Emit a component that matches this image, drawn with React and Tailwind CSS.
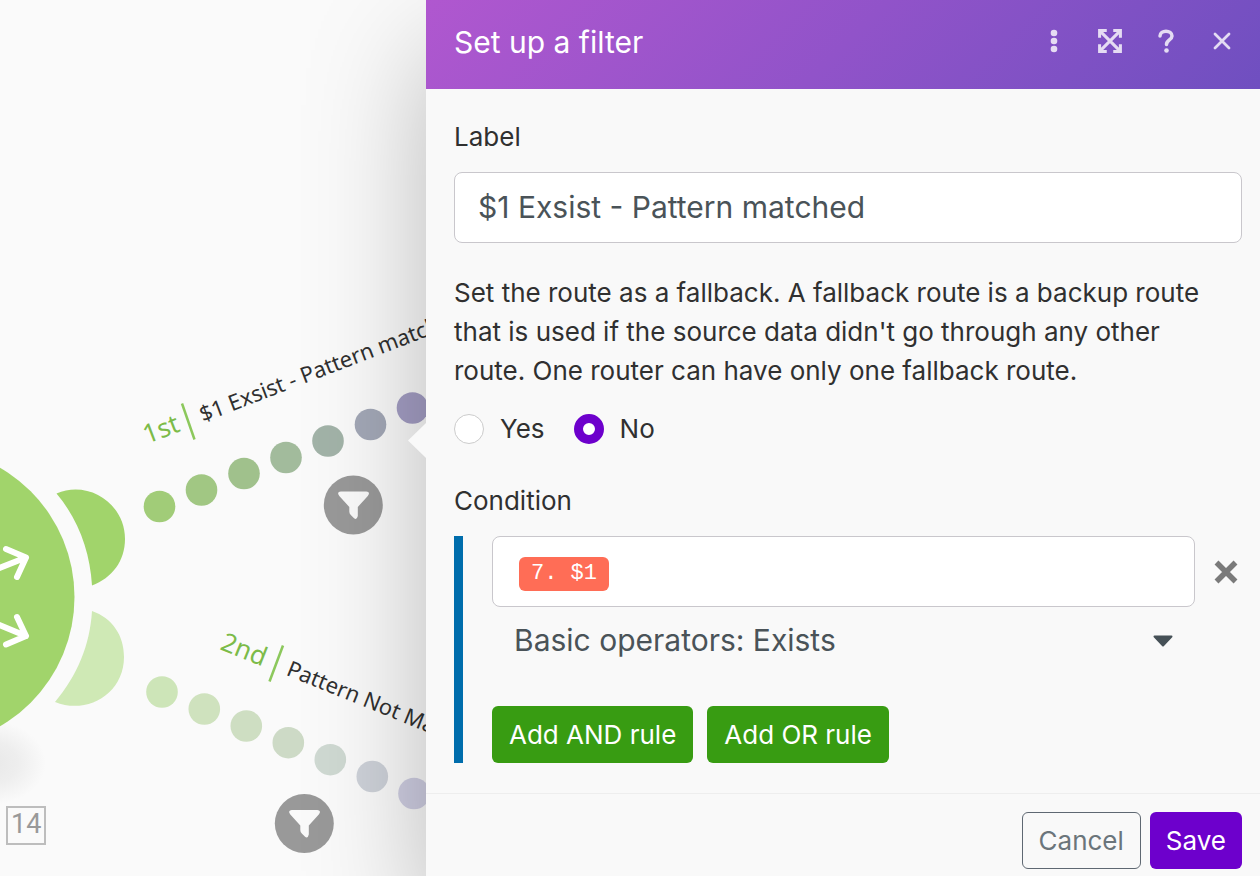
import { useState } from "react";

const firstRoute = [
  { x: 159.5, y: 506.5, color: "#a1cc78" },
  { x: 201.5, y: 490, color: "#a1c783" },
  { x: 244, y: 473.5, color: "#a0c18c" },
  { x: 286, y: 457.5, color: "#a2bb9c" },
  { x: 328, y: 441, color: "#a2b3a8" },
  { x: 370.5, y: 424.5, color: "#a3a8b7" },
  { x: 412.5, y: 408, color: "#a49ec4" },
];

const secondRoute = [
  { x: 162, y: 692, color: "#cde5b8" },
  { x: 204.3, y: 709, color: "#cfe2be" },
  { x: 246.3, y: 726, color: "#cedec2" },
  { x: 288.3, y: 742.7, color: "#cddac6" },
  { x: 330.3, y: 759.7, color: "#cfd9d2" },
  { x: 372.3, y: 776.5, color: "#ced2d9" },
  { x: 414, y: 793.5, color: "#cfcee2" },
];

function FilterBadge({ x, y }) {
  return (
    <g transform={`translate(${x} ${y})`}>
      <circle r="29.5" fill="#999" />
      <path
        d="M-12.500 -13.500H13Q17.500 -13 14.500 -9L4.500 2V11Q3.500 15.500 0.500 13L-2.500 10Q-4 8.500 -4 6.500V2L-14 -9Q-17 -13 -12.500 -13.500Z"
        fill="#fafafa"
      />
    </g>
  );
}

function Canvas() {
  return (
    <section aria-label="Scenario" className="relative w-[426px] shrink-0 overflow-hidden bg-[#fafafa]">
      <svg className="absolute top-0 left-0" width="426" height="876" viewBox="0 0 426 876">
        <defs>
          <radialGradient id="ground">
            <stop offset="0" stopColor="#e8e8e8" />
            <stop offset="0.5" stopColor="#eeeeee" />
            <stop offset="1" stopColor="#fafafa" />
          </radialGradient>
        </defs>
        <ellipse cx="-10" cy="763" rx="56" ry="42" fill="url(#ground)" />
        <circle cx="-75" cy="597" r="149.5" fill="#a1d46b" />
        <g fill="none" stroke="#fff" strokeWidth="6" strokeLinecap="round" strokeLinejoin="round">
          <path d="M-8 571L26 557.5M6 549L26 557.5L17 577" />
          <path d="M-8 622L26 636M17 617L26 636L6 644.500" />
        </g>
        <path d="M56.500 493.500C88 480 125 503 125 539C125 561 112 578 92 585.500C90 551 78 519 56.500 493.500Z" fill="#a1d46b" />
        <path d="M92 611C112 618 124 635 124 657C124 694 87 715 55 702C77 676 90 645 92 611Z" fill="#cfe9b5" />
        {firstRoute.map((dot) => (
          <circle key={dot.x} cx={dot.x} cy={dot.y} r="15.800" fill={dot.color} />
        ))}
        {secondRoute.map((dot) => (
          <circle key={dot.x} cx={dot.x} cy={dot.y} r="15.800" fill={dot.color} />
        ))}
        <FilterBadge x={353.300} y={505} />
        <FilterBadge x={304.300} y={823.500} />
        <g transform="translate(147 444) rotate(-21)" fontFamily="'Noto Sans', sans-serif">
          <text fontSize="26" fill="#7cbb48">1st</text>
          <text x="60" y="0" fontSize="22" fill="#303030">$1 Exsist - Pattern matched</text>
        </g>
        <path d="M182 403.500L194.500 439.500" stroke="#8cc85c" strokeWidth="2.500" />
        <g transform="translate(219 649) rotate(22)" fontFamily="'Noto Sans', sans-serif">
          <text fontSize="26" fill="#7cbb48">2nd</text>
          <text x="71" y="-1" fontSize="22" fill="#303030">Pattern Not Matched</text>
        </g>
        <path d="M283 645.500L269.500 681.500" stroke="#8cc85c" strokeWidth="2.500" />
        <rect x="7" y="807" width="38" height="37" fill="none" stroke="#bdbdbd" strokeWidth="2" />
        <text x="11" y="833" fontSize="27" fontFamily="Roboto, sans-serif" fill="#999">14</text>
      </svg>
    </section>
  );
}

function HeaderButton({ label, children }) {
  return (
    <button type="button" aria-label={label} className="flex size-8 items-center justify-center text-white/80">
      {children}
    </button>
  );
}

function PanelHeader() {
  return (
    <header className="flex h-[89px] items-center justify-between bg-linear-135 from-[#b057cf] via-[#9153c9] to-[#6f4fc0] pr-[22px] pb-1.5 pl-[28px]">
      <h1 className="text-[30px] leading-10 text-white">Set up a filter</h1>
      <div className="flex items-center gap-6 pb-0.5">
        <HeaderButton label="More options">
          <svg width="8" height="24" viewBox="0 0 8 24" fill="currentColor">
            <circle cx="4" cy="4" r="3.300" />
            <circle cx="4" cy="12" r="3.300" />
            <circle cx="4" cy="20" r="3.300" />
          </svg>
        </HeaderButton>
        <HeaderButton label="Expand">
          <svg width="26" height="26" viewBox="0 0 24 24" fill="none" stroke="currentColor" strokeWidth="2.800">
            <path d="M2.400 9V2.400H9M15 2.400H21.600V9M21.600 15V21.600H15M9 21.600H2.400V15M2.400 2.400L21.600 21.600M21.600 2.400L2.400 21.600" />
          </svg>
        </HeaderButton>
        <HeaderButton label="Help">
          <svg width="18" height="24" viewBox="0 0 18 24" fill="none" stroke="currentColor" strokeWidth="3.500" strokeLinecap="round" strokeLinejoin="round">
            <path d="M3 7C3 0.500 15 0.500 15 7C15 11 9.500 11 9.500 15.500" />
            <circle cx="9.500" cy="21.500" r="2.300" fill="currentColor" stroke="none" />
          </svg>
        </HeaderButton>
        <HeaderButton label="Close">
          <svg width="18" height="18" viewBox="0 0 18 18" fill="none" stroke="currentColor" strokeWidth="2.800" strokeLinecap="round">
            <path d="M2 2L16 16M16 2L2 16" />
          </svg>
        </HeaderButton>
      </div>
    </header>
  );
}

function RadioOption({ label, checked, onChange }) {
  return (
    <label className="flex items-center gap-4">
      <input
        type="radio"
        name="fallback"
        checked={checked}
        onChange={onChange}
        className="size-[30px] appearance-none rounded-full border border-[#cccccc] bg-white checked:border-[9px] checked:border-[#6d00cc]"
      />
      {label}
    </label>
  );
}

export default function App() {
  const [label, setLabel] = useState("$1 Exsist - Pattern matched");
  const [fallback, setFallback] = useState(false);

  return (
    <main className="flex min-h-screen overflow-hidden bg-[#fafafa] font-['Inter',sans-serif] text-[26px] leading-[39px] text-[#303030]">
      <Canvas />
      <form
        className="relative flex min-w-0 flex-1 flex-col bg-[#f9f9f9] shadow-[0_50px_110px_rgba(0,0,0,0.26)]"
        onSubmit={(event) => event.preventDefault()}
      >
        <svg className="absolute top-[423px] right-full" width="18" height="35" viewBox="0 0 18 35" aria-hidden="true">
          <path d="M18 0L0 17.500L18 35Z" fill="#f9f9f9" />
        </svg>
        <PanelHeader />
        <div className="flex-1 pt-7 pr-[18px] pb-[30px] pl-[28px]">
          <label htmlFor="filter-label" className="block">Label</label>
          <input
            id="filter-label"
            type="text"
            value={label}
            onChange={(event) => setLabel(event.target.value)}
            className="mt-4 block h-[71px] w-full rounded-lg border border-[#c9c7cc] bg-white px-[23px] pb-0.5 text-[30px] text-[#4a5358]"
          />
          <fieldset className="mt-[30px]">
            <legend className="pr-6">
              Set the route as a fallback. A fallback route is a backup route that is used if the source data didn't go
              through any other route. One router can have only one fallback route.
            </legend>
            <div className="mt-[19px] flex gap-[29px]">
              <RadioOption label="Yes" checked={fallback} onChange={() => setFallback(true)} />
              <RadioOption label="No" checked={!fallback} onChange={() => setFallback(false)} />
            </div>
          </fieldset>
          <h2 className="mt-[33px]">Condition</h2>
          <div className="mt-4 border-l-[9px] border-[#006dac] pl-[29px]">
            <div className="flex items-center">
              <div className="flex h-[71px] flex-1 items-center rounded-lg border border-[#c9c7cc] bg-white px-[26px] pt-1">
                <span className="rounded-md bg-[#ff6d56] px-3 font-['Liberation_Mono',monospace] text-[22px] leading-[34px] text-white">
                  7. $1
                </span>
              </div>
              <button type="button" aria-label="Remove condition" className="ml-[15px] flex size-8 items-center justify-center text-[#7a7a7a]">
                <svg width="24" height="24" viewBox="0 0 24 24" fill="none" stroke="currentColor" strokeWidth="5.500">
                  <path d="M2.500 2.500L21.500 21.500M21.500 2.500L2.500 21.500" />
                </svg>
              </button>
            </div>
            <div className="mr-12 flex items-center">
              <select
                aria-label="Operator"
                className="h-[67px] min-w-0 flex-1 appearance-none bg-transparent px-[22px] text-[30px] text-[#4a5358]"
              >
                <option>Basic operators: Exists</option>
              </select>
              <svg className="pointer-events-none mr-[21px]" width="20" height="12" viewBox="0 0 20 12" aria-hidden="true">
                <path d="M1.500 1.500H18.500L10 10.500Z" fill="#465157" stroke="#465157" strokeWidth="2" strokeLinejoin="round" />
              </svg>
            </div>
            <div className="mt-8 flex gap-[14px]">
              <button type="button" className="h-[57px] rounded-md bg-[#389c12] px-[17px] text-white">Add AND rule</button>
              <button type="button" className="h-[57px] rounded-md bg-[#389c12] px-[17px] text-white">Add OR rule</button>
            </div>
          </div>
        </div>
        <footer className="flex justify-end gap-[9px] border-t border-[#eeeeee] pt-[18px] pr-[18px] pb-[7px]">
          <button type="button" className="h-[57px] rounded-md border border-[#5f6872] px-4 text-[#6b757b]">Cancel</button>
          <button type="submit" className="h-[57px] rounded-md bg-[#6d00cc] px-4 text-white">Save</button>
        </footer>
      </form>
    </main>
  );
}
